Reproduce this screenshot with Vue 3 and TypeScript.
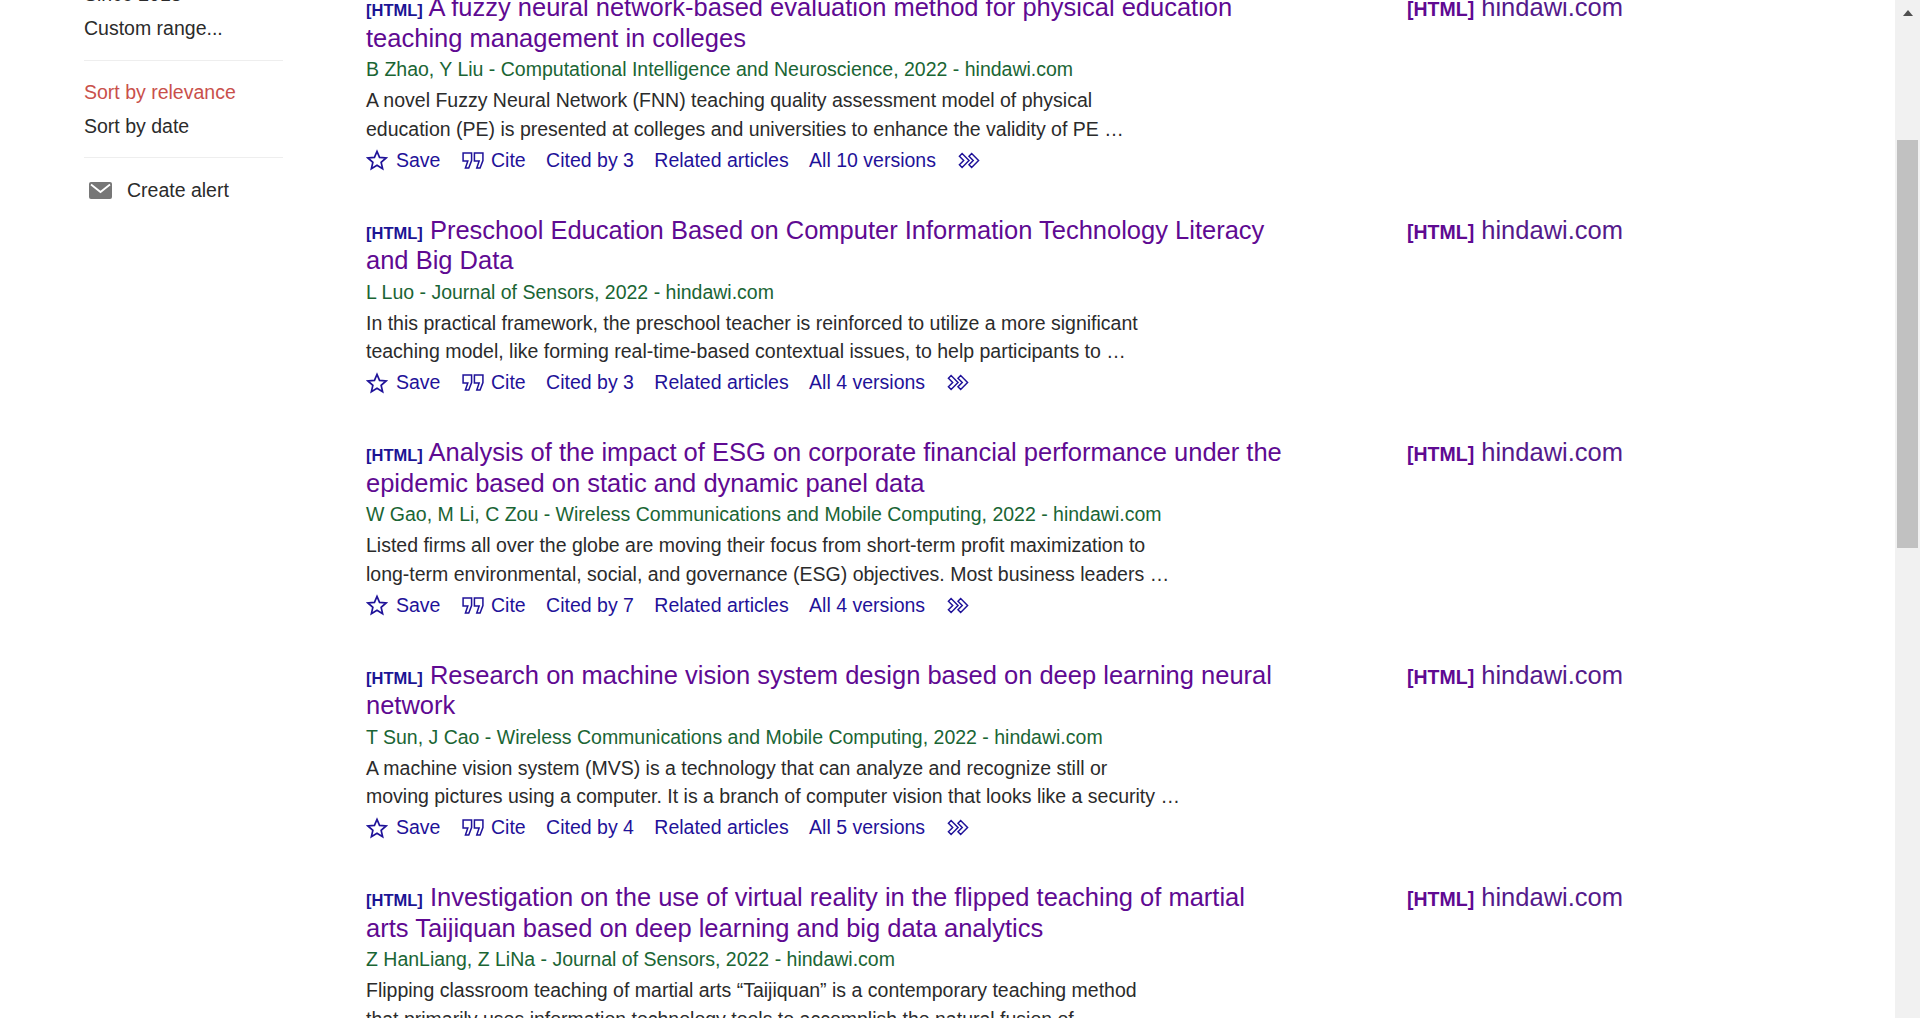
<script setup lang="ts">
interface Result {
  title: string
  byline: string
  snippet: string[]
  actions: string[]
}

const results: Result[] = [
  {
    title: 'A fuzzy neural network-based evaluation method for physical education teaching management in colleges',
    byline: 'B Zhao, Y Liu - Computational Intelligence and Neuroscience, 2022 - hindawi.com',
    snippet: [
      'A novel Fuzzy Neural Network (FNN) teaching quality assessment model of physical',
      'education (PE) is presented at colleges and universities to enhance the validity of PE …',
    ],
    actions: ['Cited by 3', 'Related articles', 'All 10 versions'],
  },
  {
    title: 'Preschool Education Based on Computer Information Technology Literacy and Big Data',
    byline: 'L Luo - Journal of Sensors, 2022 - hindawi.com',
    snippet: [
      'In this practical framework, the preschool teacher is reinforced to utilize a more significant',
      'teaching model, like forming real-time-based contextual issues, to help participants to …',
    ],
    actions: ['Cited by 3', 'Related articles', 'All 4 versions'],
  },
  {
    title: 'Analysis of the impact of ESG on corporate financial performance under the epidemic based on static and dynamic panel data',
    byline: 'W Gao, M Li, C Zou - Wireless Communications and Mobile Computing, 2022 - hindawi.com',
    snippet: [
      'Listed firms all over the globe are moving their focus from short-term profit maximization to',
      'long-term environmental, social, and governance (ESG) objectives. Most business leaders …',
    ],
    actions: ['Cited by 7', 'Related articles', 'All 4 versions'],
  },
  {
    title: 'Research on machine vision system design based on deep learning neural network',
    byline: 'T Sun, J Cao - Wireless Communications and Mobile Computing, 2022 - hindawi.com',
    snippet: [
      'A machine vision system (MVS) is a technology that can analyze and recognize still or',
      'moving pictures using a computer. It is a branch of computer vision that looks like a security …',
    ],
    actions: ['Cited by 4', 'Related articles', 'All 5 versions'],
  },
  {
    title: 'Investigation on the use of virtual reality in the flipped teaching of martial arts Taijiquan based on deep learning and big data analytics',
    byline: 'Z HanLiang, Z LiNa - Journal of Sensors, 2022 - hindawi.com',
    snippet: [
      'Flipping classroom teaching of martial arts “Taijiquan” is a contemporary teaching method',
      'that primarily uses information technology tools to accomplish the natural fusion of',
    ],
    actions: [],
  },
]
</script>

<template>
  <div class="page">
    <aside class="side">
      <div class="side__group side__group--first">
        <a class="side__link">Since 2018</a>
        <a class="side__link">Custom range...</a>
      </div>
      <div class="side__group side__group--sort">
        <a class="side__link side__link--active">Sort by relevance</a>
        <a class="side__link">Sort by date</a>
      </div>
      <a class="side__alert">
        <svg class="side__mail" viewBox="0 0 23 17" width="23" height="17">
          <rect x="0" y="0" width="23" height="17" rx="2" fill="#777" />
          <path d="M2 2.5L11.5 10L21 2.5" fill="none" stroke="#fff" stroke-width="1.8" />
        </svg>
        Create alert
      </a>
    </aside>

    <main class="list">
      <article v-for="(r, i) in results" :key="i" class="res">
        <div class="res__body">
          <h3 class="res__title"><span class="res__tag">[HTML]</span> <a class="res__link">{{ r.title }}</a></h3>
          <div class="res__by">{{ r.byline }}</div>
          <div class="res__snip">
            <div v-for="(line, j) in r.snippet" :key="j">{{ line }}</div>
          </div>
          <div v-if="r.actions.length" class="res__acts">
            <a class="res__act res__act--save">
              <svg class="ico" viewBox="0 0 15 16" width="22" height="24">
                <path d="M7.5 11.57l3.824 2.308-1.015-4.35 3.379-2.926-4.45-.378L7.5 2.122 5.761 6.224l-4.449.378 3.379 2.926-1.015 4.35z" fill="none" stroke="#1f1299" stroke-width="1.15" />
              </svg>
              Save
            </a>
            <a class="res__act">
              <svg class="ico" viewBox="0 0 23 18" width="22" height="17">
                <path d="M1 1H10V9L7 17H3.5L6 9.5H1zM13 1H22V9L19 17H15.5L18 9.5H13z" fill="none" stroke="#1f1299" stroke-width="1.6" />
              </svg>
              Cite
            </a>
            <a v-for="a in r.actions" :key="a" class="res__act">{{ a }}</a>
            <a class="res__act res__act--more">
              <svg class="ico" viewBox="0 0 20 16" width="22" height="17">
                <path d="M1 4L3.5 1.5L10 8L3.5 14.5L1 12L5 8zM10 4L12.5 1.5L19 8L12.5 14.5L10 12L14 8z" fill="none" stroke="#1f1299" stroke-width="1.4" />
              </svg>
            </a>
          </div>
        </div>
        <div class="res__side">
          <span class="res__sidetag">[HTML]</span> <a class="res__sidelink">hindawi.com</a>
        </div>
      </article>
    </main>

    <div class="bar">
      <div class="bar__arrow"></div>
      <div class="bar__thumb"></div>
    </div>
  </div>
</template>

<style>
html, body {
  margin: 0;
  background: #fff;
  overflow: hidden;
}
</style>

<style scoped>
.page {
  display: flex;
  height: 1018px;
  overflow: hidden;
  background: #fff;
  font-family: "Liberation Sans", Arial, sans-serif;
  color: #2b2b2b;
}
.side {
  width: 282px;
  flex: none;
  box-sizing: border-box;
  padding-left: 84px;
  font-size: 19.5px;
}
.side__group {
  width: 199px;
  border-bottom: 1px solid #eee;
  padding: 15px 0;
}
.side__group--first {
  margin-top: -23px;
  padding-top: 0;
}
.side__group--sort {
  padding: 14px 0 14px;
}
.side__link {
  display: block;
  line-height: 34px;
}
.side__link--active {
  color: #c9504b;
}
.side__alert {
  display: flex;
  align-items: center;
  gap: 15px;
  margin-top: 15px;
  padding-left: 5px;
  line-height: 34px;
}
.list {
  flex: 1;
  min-width: 0;
  margin-top: -8px;
}
.res {
  display: flex;
  height: 222.5px;
}
.res__body {
  width: 1125px;
  flex: none;
  box-sizing: border-box;
  padding-left: 84px;
  padding-right: 118px;
}
.res__title {
  margin: 0;
  font-size: 25.5px;
  font-weight: 400;
  line-height: 30.5px;
}
.res__tag {
  font-size: 16.5px;
  font-weight: 700;
  line-height: 1;
  color: #1c1494;
}
.res__link {
  color: #5f0a92;
}
.res__by {
  color: #1a6534;
  font-size: 19.5px;
  line-height: 28px;
  margin-top: 2px;
}
.res__snip {
  font-size: 19.5px;
  line-height: 28.5px;
  margin-top: 3px;
}
.res__acts {
  display: flex;
  align-items: center;
  gap: 20.4px;
  height: 34px;
  font-size: 19.5px;
  color: #1f1299;
}
.res__act {
  display: flex;
  align-items: center;
  gap: 7px;
}
.res__act--save {
  gap: 8px;
  margin-right: 1.2px;
}
.res__act--more {
  margin-left: 1.5px;
}
.res__side {
  font-size: 25.5px;
  line-height: 30.5px;
  color: #551a8b;
}
.res__sidetag {
  font-size: 19.5px;
  font-weight: 700;
  line-height: 1;
  color: #5f0a92;
}
.bar {
  width: 25px;
  flex: none;
  background: #f1f1f1;
  margin-left: auto;
}
.bar__arrow {
  width: 0;
  height: 0;
  margin: 10px auto 0;
  border-left: 5.5px solid transparent;
  border-right: 5.5px solid transparent;
  border-bottom: 6px solid #505050;
}
.bar__thumb {
  margin: 124px 2px 0;
  height: 408px;
  background: #c1c1c1;
}
</style>
